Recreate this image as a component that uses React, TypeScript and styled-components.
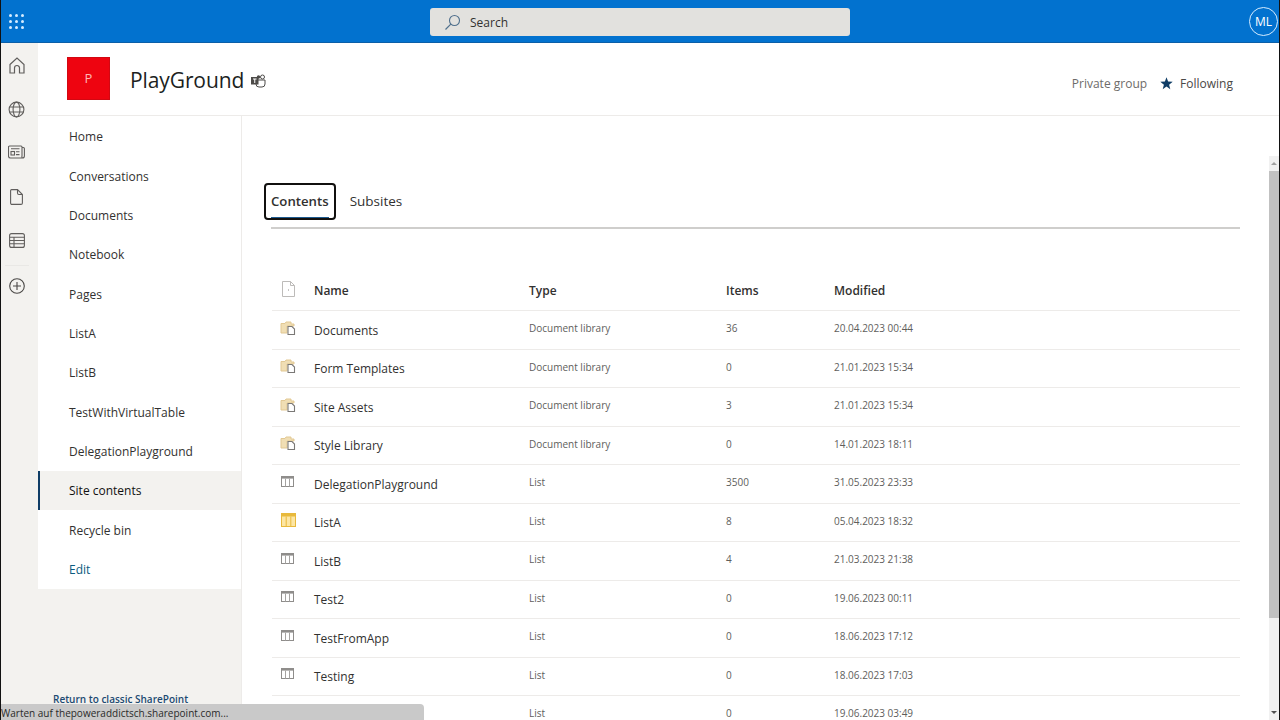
import React from "react";
import styled, { createGlobalStyle } from "styled-components";

const GlobalStyle = createGlobalStyle`
    html, body {
        margin: 0;
        padding: 0;
        height: 100%;
        overflow: hidden;
        background: #fff;
    }
    * { box-sizing: border-box; }
    body {
        font-family: "Open Sans", "Noto Sans", "Liberation Sans", sans-serif;
        color: #323130;
    }
`;

const navLinks = [
    "Home", "Conversations", "Documents", "Notebook", "Pages", "ListA", "ListB",
    "TestWithVirtualTable", "DelegationPlayground", "Site contents", "Recycle bin",
];

type RowKind = "library" | "list" | "listYellow";

const rows: { kind: RowKind; name: string; type: string; items: string; modified: string }[] = [
    { kind: "library", name: "Documents", type: "Document library", items: "36", modified: "20.04.2023 00:44" },
    { kind: "library", name: "Form Templates", type: "Document library", items: "0", modified: "21.01.2023 15:34" },
    { kind: "library", name: "Site Assets", type: "Document library", items: "3", modified: "21.01.2023 15:34" },
    { kind: "library", name: "Style Library", type: "Document library", items: "0", modified: "14.01.2023 18:11" },
    { kind: "list", name: "DelegationPlayground", type: "List", items: "3500", modified: "31.05.2023 23:33" },
    { kind: "listYellow", name: "ListA", type: "List", items: "8", modified: "05.04.2023 18:32" },
    { kind: "list", name: "ListB", type: "List", items: "4", modified: "21.03.2023 21:38" },
    { kind: "list", name: "Test2", type: "List", items: "0", modified: "19.06.2023 00:11" },
    { kind: "list", name: "TestFromApp", type: "List", items: "0", modified: "18.06.2023 17:12" },
    { kind: "list", name: "Testing", type: "List", items: "0", modified: "18.06.2023 17:03" },
    // name of this one sits behind the status bubble
    { kind: "list", name: "", type: "List", items: "0", modified: "19.06.2023 03:49" },
];

const RowIcon = ({ kind }: { kind: RowKind }) => {
    if (kind === "library") {
        return (
            <LibraryIcon width="17" height="17" viewBox="0 0 17 17" fill="none">
                <path d="M1 3.5h4l1-1.5h5v2h3v2H7v7H1z" fill="#f0deb4" stroke="#e2c893" strokeWidth="1" />
                <path d="M8 6.5h4l2.5 2.5v5.5H8z" fill="#fff" stroke="#7a7876" strokeWidth="1.1" />
            </LibraryIcon>
        );
    }
    if (kind === "listYellow") {
        return (
            <YellowListIcon width="15" height="14" viewBox="0 0 15 14" fill="none">
                <rect x=".5" y=".5" width="14" height="13" fill="#fde6a3" stroke="#e8b93c" />
                <rect x="0" y="0" width="15" height="3.5" fill="#e8b93c" />
                <path d="M5.2 3.5v10M9.8 3.5v10" stroke="#e8b93c" />
            </YellowListIcon>
        );
    }
    return (
        <ListIcon width="13" height="11" viewBox="0 0 13 11" fill="none">
            <rect x=".5" y=".5" width="12" height="10" fill="#fff" stroke="#8f8d8b" />
            <rect x="0" y="0" width="13" height="2.6" fill="#8f8d8b" />
            <path d="M4.5 2.6v8M8.5 2.6v8" stroke="#a5a3a1" />
        </ListIcon>
    );
};

const App = () => {
    return (
        <Page>
            <GlobalStyle />
            <TopBar>
                <Waffle>
                    {Array.from({ length: 9 }).map((_, i) => (
                        <i key={i} />
                    ))}
                </Waffle>
                <SearchBox>
                    <svg width="17" height="17" viewBox="0 0 17 17" fill="none">
                        <circle cx="10.5" cy="6.5" r="5" stroke="#4f6f8c" strokeWidth="1.1" />
                        <path d="M6.8 10.2 1.5 15.5" stroke="#4f6f8c" strokeWidth="1.2" />
                    </svg>
                    <SearchLabel>Search</SearchLabel>
                </SearchBox>
                <Avatar>ML</Avatar>
            </TopBar>

            <Body>
                <Rail>
                    <RailIcon>
                        <svg width="16" height="17" viewBox="0 0 16 17" fill="none" stroke="#605e5c" strokeWidth="1.2">
                            <path d="M1 7.5 8 1l7 6.5V16h-4.5v-5a2.5 2.5 0 0 0-5 0v5H1z" />
                        </svg>
                    </RailIcon>
                    <RailIcon>
                        <svg width="17" height="17" viewBox="0 0 17 17" fill="none" stroke="#605e5c" strokeWidth="1.1">
                            <circle cx="8.5" cy="8.5" r="7.4" />
                            <ellipse cx="8.5" cy="8.5" rx="3.4" ry="7.4" />
                            <path d="M1.6 6h13.8M1.6 11h13.8" />
                        </svg>
                    </RailIcon>
                    <RailIcon>
                        <svg width="17" height="14" viewBox="0 0 17 14" fill="none" stroke="#605e5c" strokeWidth="1.1">
                            <path d="M14 2.5h1.4a1 1 0 0 1 1 1V11a2 2 0 0 1-2 2H2.5a2 2 0 0 1-2-2V2a1 1 0 0 1 1-1H13a1 1 0 0 1 1 1V11a2 2 0 0 0 .4 2" />
                            <rect x="3" y="6.5" width="3.5" height="3.5" />
                            <path d="M3 3.8h8.5M8 6.8h3.5M8 9.6h3.5" />
                        </svg>
                    </RailIcon>
                    <RailIcon>
                        <svg width="13" height="16" viewBox="0 0 13 16" fill="none" stroke="#605e5c" strokeWidth="1.1">
                            <path d="M1.5.6h6L12.4 5.5V14a1.4 1.4 0 0 1-1.4 1.4H2A1.4 1.4 0 0 1 .6 14V1.5A1 1 0 0 1 1.5.6zM7.5.6v3.5a1.4 1.4 0 0 0 1.4 1.4h3.5" />
                        </svg>
                    </RailIcon>
                    <RailIcon>
                        <svg width="16" height="15" viewBox="0 0 16 15" fill="none" stroke="#605e5c" strokeWidth="1.1">
                            <rect x=".6" y=".6" width="14.8" height="13.8" rx="2" />
                            <path d="M.6 4.2h14.8M.6 7.5h14.8M.6 10.8h14.8M5 4.2v10.2" />
                        </svg>
                    </RailIcon>
                    <RailDivider />
                    <RailIcon>
                        <svg width="16" height="16" viewBox="0 0 16 16" fill="none" stroke="#4a4846" strokeWidth="1.1">
                            <circle cx="8" cy="8" r="7.3" />
                            <path d="M8 4v8M4 8h8" />
                        </svg>
                    </RailIcon>
                </Rail>

                <Site>
                    <SiteHeader>
                        <SiteLogo>P</SiteLogo>
                        <SiteTitle>PlayGround</SiteTitle>
                        <TeamsIcon width="15" height="15" viewBox="0 0 15 15" fill="#4d4b49">
                            <circle cx="11.5" cy="3" r="2" fill="none" stroke="#4d4b49" />
                            <circle cx="7.5" cy="3" r="1.7" />
                            <path d="M5 6h9v4a3 3 0 0 1-3 3H8a3 3 0 0 1-3-3z" fill="none" stroke="#4d4b49" />
                            <rect x="0" y="3" width="7.5" height="7.5" />
                            <path d="M2 5h3.5M3.75 5v4" stroke="#fff" strokeWidth="1" />
                        </TeamsIcon>
                        <HeaderRight>
                            <span>Private group</span>
                            <Following>
                                <svg width="13" height="13" viewBox="0 0 13 13">
                                    <path d="M6.5.3 8.1 4.6l4.6.2-3.6 2.9 1.2 4.5-3.8-2.6-3.8 2.6 1.2-4.5L.3 4.8l4.6-.2z" fill="#0f3d66" />
                                </svg>
                                <span>Following</span>
                            </Following>
                        </HeaderRight>
                    </SiteHeader>

                    <Columns>
                        <NavColumn>
                            <NavList>
                                {navLinks.map((name) => (
                                    <NavItem key={name} $active={name === "Site contents"}>
                                        {name}
                                    </NavItem>
                                ))}
                                <NavItem $edit>Edit</NavItem>
                            </NavList>
                            <ReturnLink>Return to classic SharePoint</ReturnLink>
                        </NavColumn>

                        <Main>
                            <Content>
                                <Tabs>
                                    <Tab $focused>Contents</Tab>
                                    <Tab>Subsites</Tab>
                                </Tabs>
                                <Table>
                                    <HeadRow>
                                        <IconCell>
                                            <svg width="13" height="16" viewBox="0 0 13 16" fill="none" stroke="#bdbbb9">
                                                <path d="M.5.5h8l4 4v11H.5zM8.5.5v4h4" />
                                                <path d="M6 9h1" stroke="#8a8886" />
                                            </svg>
                                        </IconCell>
                                        <span>Name</span>
                                        <span>Type</span>
                                        <span>Items</span>
                                        <span>Modified</span>
                                    </HeadRow>
                                    {rows.map((row, i) => (
                                        <Row key={i}>
                                            <IconCell>
                                                <RowIcon kind={row.kind} />
                                            </IconCell>
                                            <NameCell>{row.name}</NameCell>
                                            <SmallCell>{row.type}</SmallCell>
                                            <SmallCell>{row.items}</SmallCell>
                                            <SmallCell>{row.modified}</SmallCell>
                                        </Row>
                                    ))}
                                </Table>
                            </Content>
                            <Scrollbar>
                                <ScrollArrow />
                                <ScrollThumb />
                                <ScrollArrow $down />
                            </Scrollbar>
                        </Main>
                    </Columns>
                </Site>
            </Body>

            <StatusBubble>Warten auf thepoweraddictsch.sharepoint.com...</StatusBubble>
        </Page>
    );
};

const Page = styled.div`
    position: relative;
    width: 1280px;
    height: 720px;
    overflow: hidden;
    display: flex;
    flex-direction: column;
    border-left: 1px solid #111;
    border-right: 1px solid #111;
`;

const TopBar = styled.header`
    height: 43px;
    flex: none;
    background: #0272cf;
    border-bottom: 1px solid #0b5fa8;
    display: grid;
    grid-template-columns: 429px 420px 1fr;
    align-items: center;
`;

const Waffle = styled.div`
    display: grid;
    grid-template-columns: repeat(3, 3px);
    gap: 3px;
    margin-left: 8px;
    i {
        width: 3px;
        height: 3px;
        border-radius: 50%;
        background: #d5ecff;
    }
`;

const SearchBox = styled.div`
    height: 28px;
    background: #e2e1de;
    border-radius: 3px;
    display: flex;
    align-items: center;
    gap: 9px;
    padding-left: 14px;
    font-size: 12px;
    color: #323130;
    margin-top: 2px;
`;

const SearchLabel = styled.span`
    margin-top: 1px;
`;

const Avatar = styled.div`
    justify-self: end;
    margin-right: 1px;
    width: 29px;
    height: 29px;
    border: 1px solid #d5ecff;
    border-radius: 50%;
    color: #fff;
    font-size: 12px;
    display: flex;
    align-items: center;
    justify-content: center;
`;

const Body = styled.div`
    flex: 1;
    min-height: 0;
    display: flex;
`;

const Rail = styled.nav`
    width: 37px;
    flex: none;
    background: #f3f2ef;
    display: flex;
    flex-direction: column;
    align-items: center;
    padding: 11px 6px 0 0;
`;

const RailIcon = styled.div`
    height: 44px;
    width: 100%;
    flex: none;
    padding-top: 3px;
    display: flex;
    justify-content: center;
`;

const RailDivider = styled.div`
    width: 24px;
    height: 1px;
    background: #e9e8e5;
    margin-top: -9px;
    margin-bottom: 9px;
`;

const Site = styled.div`
    flex: 1;
    min-width: 0;
    display: flex;
    flex-direction: column;
`;

const SiteHeader = styled.div`
    height: 73px;
    flex: none;
    display: flex;
    align-items: center;
    padding-left: 29px;
    border-bottom: 1px solid #edebe9;
`;

const SiteLogo = styled.div`
    width: 43px;
    height: 43px;
    background: #ee0410;
    border: 1px solid #d20812;
    color: #ffb9b4;
    font-size: 13px;
    display: flex;
    align-items: center;
    justify-content: center;
    margin-top: -2px;
`;

const SiteTitle = styled.h1`
    margin: 2px 0 0 20px;
    font-size: 21px;
    font-weight: 400;
    color: #201f1e;
    letter-spacing: -0.1px;
`;

const TeamsIcon = styled.svg`
    margin: 5px 0 0 7px;
`;

const HeaderRight = styled.div`
    margin: 8px 46px 0 auto;
    display: flex;
    align-items: center;
    gap: 13px;
    font-size: 12px;
    color: #6d6b69;
`;

const Following = styled.div`
    display: flex;
    align-items: center;
    gap: 7px;
    color: #4a4846;
`;

const Columns = styled.div`
    flex: 1;
    min-height: 0;
    display: flex;
`;

const NavColumn = styled.aside`
    width: 204px;
    flex: none;
    background: #f3f2ef;
    display: flex;
    flex-direction: column;
    border-right: 1px solid #edebe9;
`;

const NavList = styled.div`
    background: #fff;
    padding: 1px 0 0;
    display: flex;
    flex-direction: column;
`;

const NavItem = styled.div<{ $active?: boolean; $edit?: boolean }>`
    height: 39.35px;
    flex: none;
    display: flex;
    align-items: center;
    padding-left: ${(p) => (p.$active ? "29px" : "31px")};
    font-size: 12px;
    color: ${(p) => (p.$edit ? "#0b5a80" : p.$active ? "#111" : "#323130")};
    background: ${(p) => (p.$active ? "#f3f2ef" : "transparent")};
    border-left: ${(p) => (p.$active ? "2px solid #0f3d66" : "none")};
`;

const ReturnLink = styled.div`
    margin-top: auto;
    padding: 0 0 14px 15px;
    font-size: 10px;
    font-weight: 600;
    color: #1c4a72;
`;

const Main = styled.main`
    flex: 1;
    min-width: 0;
    display: flex;
    position: relative;
`;

const Content = styled.div`
    flex: 1;
    min-width: 0;
    padding: 67px 29px 0 30px;
    overflow: hidden;
`;

const Tabs = styled.div`
    height: 46px;
    margin-left: -8px;
    display: flex;
    gap: 5px;
    position: relative;
    &::after {
        content: "";
        position: absolute;
        left: 7px;
        right: 0;
        bottom: 0;
        height: 2px;
        background: #cfcecc;
    }
`;

const Tab = styled.div<{ $focused?: boolean }>`
    height: 37px;
    padding: 0 ${(p) => (p.$focused ? "5px" : "7px")} 2px;
    display: flex;
    align-items: center;
    font-size: ${(p) => (p.$focused ? "13.2px" : "13.5px")};
    color: #323130;
    border-radius: 4px;
    position: relative;
    border: 2px solid ${(p) => (p.$focused ? "#11100f" : "transparent")};
    font-weight: ${(p) => (p.$focused ? 600 : 400)};
    ${(p) =>
        p.$focused &&
        `&::after {
            content: "";
            position: absolute;
            left: 5px;
            right: 5px;
            bottom: 0;
            height: 1px;
            background: #1c5a8f;
        }`}
`;

const Table = styled.div`
    margin-top: 43px;
`;

const columns = "42px 215px 197px 108px 1fr";

const HeadRow = styled.div`
    height: 39px;
    padding-bottom: 2px;
    display: grid;
    grid-template-columns: ${columns};
    align-items: center;
    font-size: 12px;
    font-weight: 600;
    color: #323130;
    border-bottom: 1px solid #edebe9;
`;

const Row = styled.div`
    height: 38.5px;
    display: grid;
    grid-template-columns: ${columns};
    align-items: center;
    border-bottom: 1px solid #edebe9;
`;

const IconCell = styled.div`
    padding-left: 10px;
    height: 20px;
    margin-top: -3px;
    display: flex;
    align-items: center;
`;

const LibraryIcon = styled.svg`
    margin-left: -2px;
`;

const ListIcon = styled.svg`
    flex: none;
    margin: -2px 0 0 -1px;
`;

const YellowListIcon = styled.svg`
    flex: none;
    margin: -1px 0 0 -1px;
`;

const NameCell = styled.span`
    font-size: 12px;
    color: #323130;
    margin-top: 1px;
`;

const SmallCell = styled.span`
    font-size: 10px;
    color: #605e5c;
    margin-top: -3px;
`;

const Scrollbar = styled.div`
    width: 10px;
    flex: none;
    margin-top: 40px;
    background: #f1f1f1;
    display: flex;
    flex-direction: column;
`;

const ScrollArrow = styled.div<{ $down?: boolean }>`
    height: 15px;
    position: relative;
    margin-top: ${(p) => (p.$down ? "auto" : "0")};
    &::after {
        content: "";
        position: absolute;
        left: 2px;
        top: 6px;
        border-left: 3px solid transparent;
        border-right: 3px solid transparent;
        ${(p) => (p.$down ? "border-top: 3px solid #505050;" : "border-bottom: 3px solid #a0a0a0;")}
    }
`;

const ScrollThumb = styled.div`
    height: 447px;
    background: #c1c1c1;
`;

const StatusBubble = styled.div`
    position: absolute;
    left: 0;
    bottom: 0;
    width: 423px;
    height: 16px;
    background: #c9c9c9;
    border-top-right-radius: 4px;
    font-size: 10px;
    line-height: 19px;
    color: #2a2a2a;
    white-space: nowrap;
`;

export default App;
